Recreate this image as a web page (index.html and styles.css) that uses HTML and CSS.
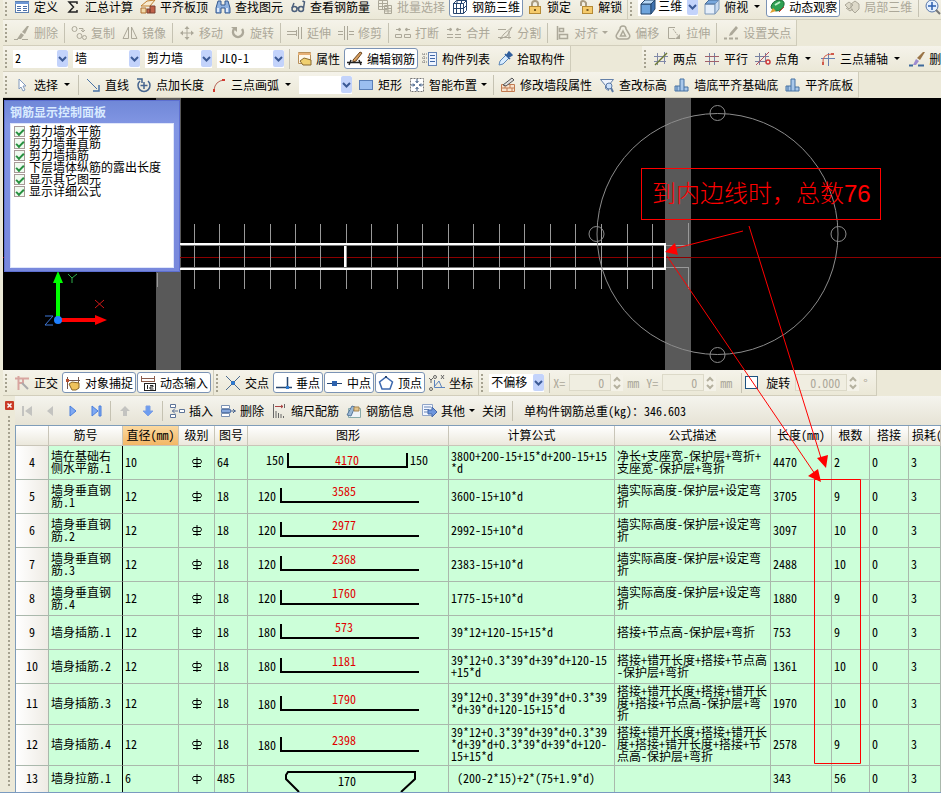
FILE: index.html
```html
<!DOCTYPE html>
<html lang="zh-CN">
<head>
    <meta charset="utf-8">
    <title>编辑钢筋</title>
    <link rel="stylesheet" href="styles.css">
</head>
<body>
<div class="app">
    <div class="toolbars">
        <!-- Main toolbar -->
        <div class="row">
            <div class="toolbar">
                <span class="grip"></span>
                <button class="tool"><svg class="icon" viewBox="0 0 16 16"><rect x="1.500" y="2.500" width="13" height="11" fill="#fff" stroke="#5b7fb0"/><path d="M1 3h14v2H1z" fill="#6d97d4"/><path d="M3 7.500h4M3 9.500h4M3 11.500h4M9 7.500h4M9 9.500h4M9 11.500h4" stroke="#4a6fa8"/></svg>定义</button>
                <button class="tool"><svg class="icon" viewBox="0 0 16 16"><path d="M12 5V3H4l4.500 5L4 13h8v-2" fill="none" stroke="#222" stroke-width="1.500"/></svg>汇总计算</button>
                <button class="tool"><svg class="icon" viewBox="0 0 16 16"><path d="M1 7l6-5 8-1-5 6z" fill="#f7ead0" stroke="#c08030"/><path d="M1 9h5v5H1z" fill="#f0d8a8" stroke="#b07030"/><path d="M7 10h3v4H7zM10 7h5v7h-5z" fill="#c0624a" stroke="#7d4030"/></svg>平齐板顶</button>
                <button class="tool"><svg class="icon" viewBox="0 0 16 16"><path d="M3 2h3v4h4V2h3l2 7v5h-5V9H6v5H1V9z" fill="#8fb2e0" stroke="#34598f"/><path d="M3 9v4M12 9v4" stroke="#dce9fa" stroke-width="2"/></svg>查找图元</button>
                <button class="tool"><svg class="icon" viewBox="0 0 16 16"><g fill="none" stroke="#4c607c" stroke-width="1.500"><circle cx="4.500" cy="10" r="2.500"/><circle cx="11" cy="10" r="2.500"/><path d="M2 9l2-5M13.500 9l1-6-2-1M7 9.500q1-1 2 0"/></g></svg>查看钢筋量</button>
                <button class="tool" disabled><svg class="icon" viewBox="0 0 16 16"><path d="M1.500 1.500h9v9h-9zM1 4.500h10M1 7.500h10M5.500 1v10M7.500 6.500h7v8h-7zM7 9.500h8M7 12h8M11 7v8" fill="none" stroke="currentColor"/></svg>批量选择</button>
                <button class="tool pressed"><svg class="icon" viewBox="0 0 16 16"><path d="M1.500 4.500l3-3h10v10l-3 3h-10zM1 4.500h10.500v10M11.500 4.500l3-3M1 9.500h10.500l3-3M4.500 4v11M8.500 4v11M5 1.500v3M9.500 1.500v3" fill="none" stroke="#27456e"/></svg>钢筋三维</button>
                <button class="tool"><svg class="icon" viewBox="0 0 16 16"><path d="M5 8V5q0-3 3-3t3 3v3" fill="none" stroke="#a99b80" stroke-width="2"/><rect x="2.500" y="7.500" width="11" height="7" fill="#f5cb6c" stroke="#b58a35"/><path d="M8 10v2" stroke="#7a5a20" stroke-width="2"/></svg>锁定</button>
                <button class="tool"><svg class="icon" viewBox="0 0 16 16"><path d="M3 7V4q0-2 2-2t3 2v4" fill="none" stroke="#a99b80" stroke-width="2"/><rect x="4.500" y="7.500" width="10" height="7" fill="#f5cb6c" stroke="#b58a35"/><path d="M9.500 10v2" stroke="#7a5a20" stroke-width="2"/></svg>解锁</button>
            </div>
            <div class="toolbar open">
                <span class="grip"></span>
                <div class="combo view-combo">
                    <svg class="icon" viewBox="0 0 16 16"><path d="M1 5h10v10H1z" fill="#6fa5dc" stroke="#26486f"/><path d="M1 5l4-4h10l-4 4z" fill="#b7d8f5" stroke="#26486f"/><path d="M11 5l4-4v9l-4 5z" fill="#3e72b0" stroke="#26486f"/></svg>
                    <select aria-label="视图"><option>三维</option></select>
                    <svg class="arrow" viewBox="0 0 11 17"><path d="M2 7l3.500 3.500L9 7" fill="none" stroke="#3c5a96" stroke-width="2"/></svg>
                </div>
                <button class="tool"><svg class="icon" viewBox="0 0 16 16"><path d="M1 5h10v10H1z" fill="#e4eefa" stroke="#7c98ba"/><path d="M1 5l4-4h10l-4 4z" fill="#79a8dd" stroke="#4a6c96"/><path d="M11 5l4-4v9l-4 5z" fill="#c8daf0" stroke="#7c98ba"/></svg>俯视<span class="caret split"></span></button>
                <button class="tool pressed"><svg class="icon" viewBox="0 0 16 16"><path d="M2 8q1-6 8-7 6 0 5 5-2 6-8 6-4 0-5-4z" fill="#2fa052" stroke="#1b6b35"/><path d="M6 6l5-3" stroke="#bff0c8" stroke-width="2"/><path d="M4 9l-3 5 6-2z" fill="#e0a030"/><path d="M10 13l5-5" stroke="#c04030"/></svg>动态观察</button>
                <button class="tool" disabled><svg class="icon" viewBox="0 0 16 16"><path d="M1 6l4-3 4 3-4 4zM7 5l4-3 4 3v5l-4 4-4-4zM2 9l4 3 3-2" fill="#ddd9c9" stroke="currentColor"/></svg>局部三维</button>
                <span class="sep"></span>
                <button class="tool" aria-label="缩放"><svg class="icon" viewBox="0 0 16 16"><circle cx="7" cy="7" r="6" fill="#e4f0ff" stroke="#5876a8"/><path d="M7 3v8M3 7h8" stroke="#2d5fb0" stroke-width="1.500"/><path d="M11 11l4 4" stroke="#777" stroke-width="2"/></svg></button>
            </div>
        </div>

        <!-- Modify toolbar -->
        <div class="row">
            <div class="toolbar">
                <span class="grip"></span>
                <button class="tool" disabled><svg class="icon" viewBox="0 0 16 16"><path d="M15 1l-4 8-3-2 5-6zM7 8l3 2-3 4H3z" fill="currentColor"/><path d="M0 14.500h4M8 14.500h6" stroke="currentColor"/></svg>删除</button>
                <span class="sep"></span>
                <button class="tool" disabled><svg class="icon" viewBox="0 0 16 16"><g fill="none" stroke="currentColor"><circle cx="3.500" cy="4" r="2.500"/><circle cx="8.500" cy="11" r="2.500"/><circle cx="13.500" cy="12.500" r="2"/><path d="M8 3.500h4v3M10 5l2 2 2-2" /></g></svg>复制</button>
                <button class="tool" disabled><svg class="icon" viewBox="0 0 16 16"><path d="M6.500 2v11.500H1zM9.500 2v11.500H15z" fill="none" stroke="currentColor"/></svg>镜像</button>
                <span class="sep"></span>
                <button class="tool" disabled><svg class="icon" viewBox="0 0 16 16"><path d="M8 3v10M3 8h10" stroke="currentColor"/><path d="M8 1l2.500 3h-5zM8 15l2.500-3h-5zM1 8l3-2.500v5zM15 8l-3-2.500v5z" fill="currentColor"/></svg>移动</button>
                <button class="tool" disabled><svg class="icon" viewBox="0 0 16 16"><path d="M4 4a5 5 0 1 0 8 0" fill="none" stroke="currentColor" stroke-width="2.500"/><path d="M1 2h6v5z" fill="currentColor"/></svg>旋转</button>
                <span class="sep"></span>
                <button class="tool" disabled><svg class="icon" viewBox="0 0 16 16"><path d="M0 6.500h9M0 9.500h9M11.500 2v12M14.500 2v12M9.500 5v6" stroke="currentColor"/></svg>延伸</button>
                <button class="tool" disabled><svg class="icon" viewBox="0 0 16 16"><path d="M0 6.500h5M0 9.500h5M11 6.500h5M11 9.500h5M6.500 1v14M9.500 1v14" stroke="currentColor"/></svg>修剪</button>
                <span class="sep"></span>
                <button class="tool" disabled><svg class="icon" viewBox="0 0 16 16"><path d="M1 4.500h4M11 4.500h4M4 3v3l2-1.500zM12 3v3l-2-1.500z" stroke="currentColor" fill="currentColor"/><path d="M.5 9.500h6v3h-6zM9.500 9.500h6v3h-6z" fill="none" stroke="currentColor"/></svg>打断</button>
                <button class="tool" disabled><svg class="icon" viewBox="0 0 16 16"><path d="M1 4.500h4M11 4.500h4M4 3v3l2-1.500zM12 3v3l-2-1.500z" stroke="currentColor" fill="currentColor"/><path d="M1 9.500h6M9 9.500h6M1 12.500h6M9 12.500h6" stroke="currentColor"/></svg>合并</button>
                <button class="tool" disabled><svg class="icon" viewBox="0 0 16 16"><path d="M1 4.500h8M1 12.500h13M3 14l4-5 8-7-5 9zM12 6v8" fill="none" stroke="currentColor"/></svg>分割</button>
                <span class="sep"></span>
                <button class="tool" disabled><svg class="icon" viewBox="0 0 16 16"><path d="M3.500 1v14M5.500 3.500h4v3h-4zM5.500 9.500h8v4h-8z" fill="none" stroke="currentColor" stroke-width="1.500"/></svg>对齐<span class="caret"></span></button>
                <button class="tool" disabled><svg class="icon" viewBox="0 0 16 16"><g fill="none" stroke="currentColor" stroke-width="1.500"><path d="M5 4a3 3 0 0 1 6 0l3 5a3 3 0 0 1-2 5H4a3 3 0 0 1-2-5z"/><path d="M8 6l2.500 5h-5z"/></g></svg>偏移</button>
                <button class="tool" disabled><svg class="icon" viewBox="0 0 16 16"><path d="M9 2.500H2.500v11H9" fill="none" stroke="currentColor"/><path d="M7 4l6 8" stroke="currentColor" stroke-dasharray="2 1"/><path d="M14 9v5H9z" fill="currentColor"/></svg>拉伸</button>
                <span class="sep"></span>
                <button class="tool" disabled><svg class="icon" viewBox="0 0 16 16"><path d="M6 11l1-3 6-7 2 2-6 7z" fill="currentColor"/><path d="M1 13.500h3M6 13.500h4M12 13.500h3" stroke="currentColor" stroke-width="2"/></svg>设置夹点</button>
            </div>
        </div>

        <!-- Member selection toolbar -->
        <div class="row">
            <div class="toolbar">
                <span class="grip"></span>
                <div class="combo short"><select aria-label="楼层"><option>2</option></select><svg class="arrow" viewBox="0 0 11 17"><path d="M2 7l3.500 3.500L9 7" fill="none" stroke="#3c5a96" stroke-width="2"/></svg></div>
                <div class="combo"><select aria-label="构件类型"><option>墙</option></select><svg class="arrow" viewBox="0 0 11 17"><path d="M2 7l3.500 3.500L9 7" fill="none" stroke="#3c5a96" stroke-width="2"/></svg></div>
                <div class="combo"><select aria-label="构件类别"><option>剪力墙</option></select><svg class="arrow" viewBox="0 0 11 17"><path d="M2 7l3.500 3.500L9 7" fill="none" stroke="#3c5a96" stroke-width="2"/></svg></div>
                <div class="combo"><select aria-label="构件名称"><option>JLQ-1</option></select><svg class="arrow" viewBox="0 0 11 17"><path d="M2 7l3.500 3.500L9 7" fill="none" stroke="#3c5a96" stroke-width="2"/></svg></div>
                <span class="sep"></span>
                <button class="tool"><svg class="icon" viewBox="0 0 16 16"><path d="M2.500 1.500h12v11h-12z" fill="#fff8ea" stroke="#b9905a"/><path d="M2 2h13v2H2z" fill="#e6b077"/><path d="M4 10l4-3 7 2v5H7z" fill="#f0d070" stroke="#8a6b30"/></svg>属性</button>
                <button class="tool pressed"><svg class="icon" viewBox="0 0 16 16"><path d="M6 9l7-8 2 1-6 8-3 1z" fill="#d8a060" stroke="#6d4822"/><path d="M0 11.500h15M2 14l2-5M12 9l2 5" stroke="#222" stroke-width="1.500"/></svg>编辑钢筋</button>
                <button class="tool"><svg class="icon" viewBox="0 0 16 16"><path d="M0 3h5M0 7h5M0 11h5M2 3v10" stroke="#777" stroke-dasharray="1 1"/><rect x="6.500" y="1.500" width="8" height="13" fill="#eef4ff" stroke="#6685b5"/><path d="M8 4.500h5M8 7.500h5M8 10.500h5" stroke="#3f67a5"/></svg>构件列表</button>
                <button class="tool"><svg class="icon" viewBox="0 0 16 16"><path d="M2 14l1-4 6-6 3 3-6 6z" fill="#d8ecff" stroke="#5b87b8"/><path d="M8 3l5 5M10 4l2-3 3 3-3 2z" fill="#315f9d" stroke="#315f9d" stroke-width="1.500"/></svg>拾取构件</button>
            </div>
            <div class="toolbar open axis-bar">
                <span class="grip"></span>
                <button class="tool"><svg class="icon" viewBox="0 0 16 16"><path d="M4.500 2v12M11.500 1v12M1 5.500h14M1 10.500h12" stroke="#8088a8"/><path d="M2 14L14 2" stroke="#6d7a35" stroke-width="1.500"/></svg>两点</button>
                <button class="tool"><svg class="icon" viewBox="0 0 16 16"><path d="M5.500 2v12M10.500 2v12" stroke="#7484a8"/><path d="M1 5.500h14M1 10.500h14" stroke="#a1606a"/></svg>平行</button>
                <button class="tool"><svg class="icon" viewBox="0 0 16 16"><path d="M4.500 2v12M10.500 2v9M0 5.500h14M0 10.500h10" stroke="#7880a0"/><path d="M1 14L14 1" stroke="#b65060"/><circle cx="13" cy="11" r="2" fill="none" stroke="#cf3b3b" stroke-width="1.500"/></svg>点角<span class="caret split"></span></button>
                <button class="tool"><svg class="icon" viewBox="0 0 16 16"><path d="M1 7.500h14M8.500 2v13" stroke="#6780b0"/><path d="M3 12Q2 3 12 3" fill="none" stroke="#d05a4a"/><path d="M2 11h2v3H2zM11 2h3v2h-3z" fill="#d05a4a"/></svg>三点辅轴<span class="caret split"></span></button>
                <button class="tool"><svg class="icon" viewBox="0 0 16 16"><path d="M16 1l-5 8-3-2 6-6z" fill="#9a7548"/><path d="M7 8l3 2-3 4H4z" fill="#9d8cd0"/><path d="M0 14.500h4M9 14.500h6" stroke="#3e6a9c" stroke-width="2"/></svg>删除</button>
            </div>
        </div>

        <!-- Draw toolbar -->
        <div class="row">
            <div class="toolbar">
                <span class="grip"></span>
                <button class="tool"><svg class="icon" viewBox="0 0 16 16"><path d="M5 2v10l2-2 2 4 2-1-2-4h3z" fill="#fff" stroke="#8099bd"/></svg>选择<span class="caret split"></span></button>
                <span class="sep"></span>
                <button class="tool"><svg class="icon" viewBox="0 0 16 16"><path d="M2 2l10 10" stroke="#4872a5"/><path d="M14 8v6H8" fill="none" stroke="#4872a5" stroke-width="1.500"/></svg>直线</button>
                <button class="tool"><svg class="icon" viewBox="0 0 16 16"><path d="M4 4a6 6 0 1 0 8 0" fill="none" stroke="#46658f" stroke-width="1.500"/><path d="M1 2h5v4M8 5v7M4.500 8.500h7" fill="none" stroke="#46658f" stroke-width="1.500"/></svg>点加长度</button>
                <button class="tool"><svg class="icon" viewBox="0 0 16 16"><path d="M3 13Q4 4 13 3" fill="none" stroke="#b8695c"/><path d="M2 12h2v3H2zM11 2h3v2h-3z" fill="#d23a30"/></svg>三点画弧<span class="caret split"></span></button>
                <div class="combo arc"><select aria-label="画弧参数"><option></option></select><svg class="arrow" viewBox="0 0 11 17"><path d="M2 7l3.500 3.500L9 7" fill="none" stroke="#3c5a96" stroke-width="2"/></svg></div>
                <button class="tool"><svg class="icon" viewBox="0 0 16 16"><rect x="1.500" y="3.500" width="13" height="9" fill="#9bbef0" stroke="#5a7fb8"/></svg>矩形</button>
                <button class="tool"><svg class="icon" viewBox="0 0 16 16"><rect x="1.500" y="1.500" width="13" height="13" fill="#fff" stroke="#777" stroke-dasharray="2 1"/><path d="M8 2v4M8 10v4M2 8h4M10 8h4" stroke="#35557f"/><path d="M6.500 4L8 5.500 9.500 4M6.500 12L8 10.500 9.500 12M4 6.500L5.500 8 4 9.500M12 6.500L10.500 8 12 9.500" fill="none" stroke="#35557f"/></svg>智能布置<span class="caret"></span></button>
                <span class="sep"></span>
                <button class="tool"><svg class="icon" viewBox="0 0 16 16"><path d="M1.500 7.500h13v7h-13zM1 11h14M5 8v3M10 8v3M7 11v3M12 11v3" fill="#f8e2cc" stroke="#c27a50"/><path d="M3 8l9-7 2 2-8 6z" fill="#ddd" stroke="#555"/></svg>修改墙段属性</button>
                <button class="tool"><svg class="icon" viewBox="0 0 16 16"><path d="M1.500 2.500h13l-5 6v5l-3-2v-3z" fill="#eef3fc" stroke="#6480a8"/><circle cx="10" cy="9" r="3" fill="#cfe2fa" stroke="#5a78a4"/><path d="M12 11l2 4" stroke="#5a78a4" stroke-width="2"/></svg>查改标高</button>
                <button class="tool"><svg class="icon" viewBox="0 0 16 16"><path d="M6 2h4v8h4v4H1V9h5z" fill="#a9c8ea" stroke="#4672a3"/><path d="M6 9v5M10 10v4M3 9v5" stroke="#4672a3"/></svg>墙底平齐基础底</button>
                <button class="tool"><svg class="icon" viewBox="0 0 16 16"><path d="M6 2h4v8h4v4H1V9h5z" fill="#a9c8ea" stroke="#4672a3"/><path d="M6 9v5M10 10v4M3 9v5" stroke="#4672a3"/></svg>平齐底板</button>
            </div>
        </div>
    </div>

    <!-- Model view -->
    <div class="viewport">
        <svg class="model" width="100%" height="272">
            <g transform="translate(-3 -98)" shape-rendering="crispEdges">
                <path d="M156 98h25v272h-25zM665 98h26v272h-26z" fill="#595959"/>
                <path d="M3 257.500h2000" stroke="#8c0000"/>
                <path d="M194.500 224v65M219.500 224v65M244.500 224v65M270.500 224v65M295.500 224v65M320.500 224v65M346.500 224v65M371.500 224v65M397.500 224v65M422.500 224v65M448.500 224v65M473.500 224v65M499.500 224v65M524.500 224v65M550.500 224v65M575.500 224v65M601.500 224v65M627.500 224v65M652.500 224v65M157.500 273v14M688.500 223v22.500H666M688.500 289v-21.500H666" fill="none" stroke="#999"/>
                <path d="M179 244h487M179 269h487M665 243v27M345 243v27" stroke="#fff" stroke-width="2" fill="none"/>
                <path d="M179 245.500h485M179 267.500h485" stroke="#777"/>
            </g>
            <g transform="translate(-3 -98)" fill="none">
                <g stroke="#8c8c8c">
                    <circle cx="717.500" cy="234" r="120.500"/>
                    <circle cx="717.500" cy="113" r="7.500"/>
                    <circle cx="838.500" cy="234" r="7.500"/>
                    <circle cx="717.500" cy="355" r="7.500"/>
                    <circle cx="596.500" cy="234" r="7.500"/>
                </g>
                <path d="M58 320v-40" stroke="#0f0" stroke-width="4"/>
                <path d="M58 271l5 12H53z" fill="#0f0"/>
                <path d="M58 320h40" stroke="#f00" stroke-width="4"/>
                <path d="M107 320l-12-5v10z" fill="#f00"/>
                <circle cx="58" cy="320" r="4" fill="#1e80ff"/>
                <path d="M68 274l4 4 5-4M72 278v5" stroke="#2fae4a"/>
                <path d="M95 300l9 8M104 300l-9 8" stroke="#d01818"/>
                <path d="M45 316h8l-8 9h8" stroke="#3f78d8"/>
            </g>
        </svg>
        <!-- Display options palette -->
        <div class="palette">
            <div class="palette-title">钢筋显示控制面板</div>
            <div class="palette-body">
                <label><input type="checkbox" checked>剪力墙水平筋</label>
                <label><input type="checkbox" checked>剪力墙垂直筋</label>
                <label><input type="checkbox" checked>剪力墙插筋</label>
                <label><input type="checkbox" checked>下层墙体纵筋的露出长度</label>
                <label><input type="checkbox" checked>显示其它图元</label>
                <label><input type="checkbox" checked>显示详细公式</label>
            </div>
        </div>
    </div>

    <!-- Snap toolbar -->
    <div class="row">
        <div class="toolbar">
            <span class="grip"></span>
            <button class="tool"><svg class="icon" viewBox="0 0 16 16"><path d="M1 3.500h14M4.500 1v14M4 8h5V3" fill="none" stroke="#d8a5a0" stroke-width="2"/><path d="M8 8l6 6" stroke="#aaa" stroke-width="2"/></svg>正交</button>
            <button class="tool pressed"><svg class="icon" viewBox="0 0 16 16"><path d="M2.500 2v12M13.500 2v9M1 5.500h14" stroke="#71544b"/><path d="M4 9l3-2 7 1v5l-3 2H7z" fill="#efc25c" stroke="#8a6422"/><path d="M1 4h3v3H1z" fill="#b85030"/></svg>对象捕捉</button>
            <button class="tool pressed"><svg class="icon" viewBox="0 0 16 16"><path d="M1 3.500h14M1.500 1v5M14.500 1v5M1 6.500h14" stroke="#8a5a4a"/><rect x="4.500" y="8.500" width="11" height="7" fill="#fff" stroke="#222"/><path d="M7.500 10v4M10 10.500h3v1.500h-3v2h3.500" fill="none" stroke="#222"/></svg>动态输入</button>
        </div>
        <div class="toolbar">
            <span class="grip"></span>
            <button class="tool"><svg class="icon" viewBox="0 0 16 16"><path d="M1 1l14 14M15 1L1 15" stroke="#49698f"/><path d="M8 6l2 2-2 2-2-2z" fill="#2d7ad0" stroke="#2d7ad0"/></svg>交点</button>
            <button class="tool pressed"><svg class="icon" viewBox="0 0 16 16"><path d="M0 12.500h16M11.500 2v11" stroke="#27456e" stroke-width="1.500"/><path d="M10 11h3v3h-3z" fill="#2d7ad0"/></svg>垂点</button>
            <button class="tool pressed"><svg class="icon" viewBox="0 0 16 16"><path d="M0 8.500h15" stroke="#27456e"/><path d="M5 6h5v5H5z" fill="#2d62ae"/></svg>中点</button>
            <button class="tool pressed"><svg class="icon" viewBox="0 0 16 16"><path d="M8 2l6.500 5-2.500 7H4L1.500 7z" fill="none" stroke="#3c68ae" stroke-width="1.500"/><path d="M7 1h2v2H7z" fill="#27456e"/></svg>顶点</button>
            <button class="tool"><svg class="icon" viewBox="0 0 16 16"><path d="M5.500 5v7.500H16M5 12l5-6 3 7" fill="none" stroke="#5b83bd"/><path d="M0 3l2 2 2-2M2 5v3M12 0l3 4M15 0l-3 4" stroke="#666" fill="none"/><circle cx="2" cy="14" r="1.500" fill="none" stroke="#666"/><circle cx="6" cy="2" r="1.500" fill="none" stroke="#666"/></svg>坐标</button>
        </div>
        <div class="toolbar">
            <span class="grip"></span>
            <div class="combo short"><select aria-label="偏移方式"><option>不偏移</option></select><svg class="arrow" viewBox="0 0 11 17"><path d="M2 7l3.500 3.500L9 7" fill="none" stroke="#3c5a96" stroke-width="2"/></svg></div>
            <span class="sep"></span>
            <div class="field"><label for="offsetX">X=</label><input type="text" id="offsetX" value="0" disabled><svg class="spin" viewBox="0 0 12 16"><path d="M0 0h12v16H0z" fill="#f4f2e8"/><path d="M3 6l3-3 3 3M3 10l3 3 3-3" fill="none" stroke="#b5b19f" stroke-width="2"/></svg><span>mm</span></div>
            <div class="field"><label for="offsetY">Y=</label><input type="text" id="offsetY" value="0" disabled><svg class="spin" viewBox="0 0 12 16"><path d="M0 0h12v16H0z" fill="#f4f2e8"/><path d="M3 6l3-3 3 3M3 10l3 3 3-3" fill="none" stroke="#b5b19f" stroke-width="2"/></svg><span>mm</span></div>
            <span class="sep"></span>
            <label class="rotate"><input type="checkbox" id="rotate">旋转</label>
            <div class="field wide"><input type="text" aria-label="旋转角度" value="0.000" disabled><svg class="spin" viewBox="0 0 12 16"><path d="M0 0h12v16H0z" fill="#f4f2e8"/><path d="M3 6l3-3 3 3M3 10l3 3 3-3" fill="none" stroke="#b5b19f" stroke-width="2"/></svg><span>°</span></div>
        </div>
    </div>

    <!-- Rebar edit panel -->
    <div class="panel">
        <div class="panel-side">
            <button class="close" aria-label="关闭面板"><svg viewBox="0 0 9 9"><rect width="9" height="9" rx="1" fill="#c93a26"/><path d="M2.500 2.500l4 4M6.500 2.500l-4 4" stroke="#fff" stroke-width="1.500"/></svg></button>
            <span class="side-grip"></span>
        </div>
        <div class="panel-main">
            <div class="panel-bar">
                <button class="tool" disabled aria-label="首行"><svg class="icon" viewBox="0 0 16 16"><path d="M3 3h2v10H3zM13 3v10L6 8z" fill="#c3c3c0"/></svg></button>
                <button class="tool" disabled aria-label="上一行"><svg class="icon" viewBox="0 0 16 16"><path d="M11 3v10L5 8z" fill="#c3c3c0"/></svg></button>
                <button class="tool" aria-label="下一行"><svg class="icon" viewBox="0 0 16 16"><path d="M5 3v10l6-5z" fill="#7fa9f2" stroke="#4b7fdc"/></svg></button>
                <button class="tool" aria-label="末行"><svg class="icon" viewBox="0 0 16 16"><path d="M4 3v10l6-5zM11 3h2v10h-2z" fill="#7fa9f2" stroke="#4b7fdc"/></svg></button>
                <span class="sep"></span>
                <button class="tool" disabled aria-label="上移"><svg class="icon" viewBox="0 0 16 16"><path d="M8 3l5 5h-3v5H6V8H3z" fill="#c3c3c0"/></svg></button>
                <button class="tool" aria-label="下移"><svg class="icon" viewBox="0 0 16 16"><path d="M8 13l5-5h-3V3H6v5H3z" fill="#6d9df0" stroke="#7fa0e4"/></svg></button>
                <span class="sep"></span>
                <button class="tool"><svg class="icon" viewBox="0 0 16 16"><path d="M1.500 1.500h5v3h-5zM1.500 11.500h5v3h-5zM10.500 6.500h5v3h-5z" fill="#fff" stroke="#5c7398"/><path d="M3 8h6M6 5.500L3.500 8 6 10.500" fill="none" stroke="#5c7398"/></svg>插入</button>
                <button class="tool"><svg class="icon" viewBox="0 0 16 16"><path d="M1.500 2.500h8v3h-8zM1.500 10.500h8v3h-8z" fill="#fff" stroke="#7b91b2"/><path d="M1.500 6.500h9v3h-9z" fill="#87a8dc" stroke="#5878ac"/><path d="M11 8h5M13 6l2 2-2 2" fill="none" stroke="#44608c"/></svg>删除</button>
                <button class="tool"><svg class="icon" viewBox="0 0 16 16"><path d="M2.500 1v14M13.500 1v4M5 8v7M7.500 10v5M10 11v4M12.500 13v2" stroke="#666"/><path d="M4 3.500h8M10 2l2 1.500L10 5" fill="none" stroke="#a44"/></svg>缩尺配筋</button>
                <button class="tool"><svg class="icon" viewBox="0 0 16 16"><path d="M2.500 5.500h12v9h-12z" fill="#eef3f8" stroke="#8aa"/><path d="M1 12l5-9 3 1-4 9z" fill="#9bb8d4" stroke="#58789c"/><path d="M8 4h5v4H8z" fill="#e4c48c" stroke="#a58550"/></svg>钢筋信息</button>
                <button class="tool"><svg class="icon" viewBox="0 0 16 16"><path d="M1.500 1.500h10v11h-10z" fill="#f2f6ff" stroke="#90a5c8"/><path d="M3 4h7M3 6.500h5M3 9h5" stroke="#6b88b8"/><path d="M7 7h4V4l5 5-5 5v-3H7z" fill="#6d95dc" stroke="#4568a8"/></svg>其他<span class="caret"></span></button>
                <button class="tool">关闭</button>
                <span class="sep"></span>
                <span class="total">单构件钢筋总重(kg)：346.603</span>
            </div>
            <div class="grid">
                <table>
                    <colgroup>
                        <col class="c-no"><col class="c-name"><col class="c-dia"><col class="c-grade"><col class="c-fig"><col class="c-shape"><col class="c-formula"><col class="c-desc"><col class="c-len"><col class="c-count"><col class="c-lap"><col>
                    </colgroup>
                    <thead>
                        <tr>
                            <th></th>
                            <th>筋号</th>
                            <th class="current">直径(mm)</th>
                            <th>级别</th>
                            <th>图号</th>
                            <th>图形</th>
                            <th>计算公式</th>
                            <th>公式描述</th>
                            <th>长度(mm)</th>
                            <th>根数</th>
                            <th>搭接</th>
                            <th class="loss">损耗(%)</th>
                        </tr>
                    </thead>
                    <tbody>
                        <tr>
                            <th>4</th><td>墙在基础右<br>侧水平筋.1</td><td>10</td>
                            <td class="grade"><svg viewBox="0 0 12 12"><path d="M2.500 2.500h7l1 2-1 2h-7l-1-2zM6 0v11M2 9.500h8" fill="none" stroke="#000"/></svg></td><td>64</td>
                            <td class="shape"><svg viewBox="0 0 200 33"><path d="M40 7v14h119V7" class="bar"/><text x="18" y="19">150</text><text x="162" y="19">150</text><text x="99" y="19" class="val">4170</text></svg></td>
                            <td>3800+200-15+15*d+200-15+15<br>*d</td><td>净长+支座宽-保护层+弯折+<br>支座宽-保护层+弯折</td><td>4470</td><td>2</td><td>0</td><td>3</td>
                        </tr>
                        <tr>
                            <th>5</th><td>墙身垂直钢<br>筋.1</td><td>12</td>
                            <td class="grade"><svg viewBox="0 0 12 12"><path d="M2.500 2.500h7l1 2-1 2h-7l-1-2zM6 0v11M2 9.500h8" fill="none" stroke="#000"/></svg></td><td>18</td>
                            <td class="shape"><svg viewBox="0 0 200 33"><path d="M33 8v14h138" class="bar"/><text x="10" y="21">120</text><text x="96" y="16" class="val">3585</text></svg></td>
                            <td>3600-15+10*d</td><td>墙实际高度-保护层+设定弯<br>折</td><td>3705</td><td>9</td><td>0</td><td>3</td>
                        </tr>
                        <tr>
                            <th>6</th><td>墙身垂直钢<br>筋.2</td><td>12</td>
                            <td class="grade"><svg viewBox="0 0 12 12"><path d="M2.500 2.500h7l1 2-1 2h-7l-1-2zM6 0v11M2 9.500h8" fill="none" stroke="#000"/></svg></td><td>18</td>
                            <td class="shape"><svg viewBox="0 0 200 33"><path d="M33 8v14h138" class="bar"/><text x="10" y="21">120</text><text x="96" y="16" class="val">2977</text></svg></td>
                            <td>2992-15+10*d</td><td>墙实际高度-保护层+设定弯<br>折</td><td>3097</td><td>10</td><td>0</td><td>3</td>
                        </tr>
                        <tr>
                            <th>7</th><td>墙身垂直钢<br>筋.3</td><td>12</td>
                            <td class="grade"><svg viewBox="0 0 12 12"><path d="M2.500 2.500h7l1 2-1 2h-7l-1-2zM6 0v11M2 9.500h8" fill="none" stroke="#000"/></svg></td><td>18</td>
                            <td class="shape"><svg viewBox="0 0 200 33"><path d="M33 8v14h138" class="bar"/><text x="10" y="21">120</text><text x="96" y="16" class="val">2368</text></svg></td>
                            <td>2383-15+10*d</td><td>墙实际高度-保护层+设定弯<br>折</td><td>2488</td><td>10</td><td>0</td><td>3</td>
                        </tr>
                        <tr>
                            <th>8</th><td>墙身垂直钢<br>筋.4</td><td>12</td>
                            <td class="grade"><svg viewBox="0 0 12 12"><path d="M2.500 2.500h7l1 2-1 2h-7l-1-2zM6 0v11M2 9.500h8" fill="none" stroke="#000"/></svg></td><td>18</td>
                            <td class="shape"><svg viewBox="0 0 200 33"><path d="M33 8v14h138" class="bar"/><text x="10" y="21">120</text><text x="96" y="16" class="val">1760</text></svg></td>
                            <td>1775-15+10*d</td><td>墙实际高度-保护层+设定弯<br>折</td><td>1880</td><td>9</td><td>0</td><td>3</td>
                        </tr>
                        <tr>
                            <th>9</th><td>墙身插筋.1</td><td>12</td>
                            <td class="grade"><svg viewBox="0 0 12 12"><path d="M2.500 2.500h7l1 2-1 2h-7l-1-2zM6 0v11M2 9.500h8" fill="none" stroke="#000"/></svg></td><td>18</td>
                            <td class="shape"><svg viewBox="0 0 200 33"><path d="M33 8v14h138" class="bar"/><text x="10" y="21">180</text><text x="96" y="16" class="val">573</text></svg></td>
                            <td>39*12+120-15+15*d</td><td>搭接+节点高-保护层+弯折</td><td>753</td><td>9</td><td>0</td><td>3</td>
                        </tr>
                        <tr>
                            <th>10</th><td>墙身插筋.2</td><td>12</td>
                            <td class="grade"><svg viewBox="0 0 12 12"><path d="M2.500 2.500h7l1 2-1 2h-7l-1-2zM6 0v11M2 9.500h8" fill="none" stroke="#000"/></svg></td><td>18</td>
                            <td class="shape"><svg viewBox="0 0 200 33"><path d="M33 8v14h138" class="bar"/><text x="10" y="21">180</text><text x="96" y="16" class="val">1181</text></svg></td>
                            <td>39*12+0.3*39*d+39*d+120-15<br>+15*d</td><td>搭接+错开长度+搭接+节点高<br>-保护层+弯折</td><td>1361</td><td>10</td><td>0</td><td>3</td>
                        </tr>
                        <tr class="tall">
                            <th>11</th><td>墙身插筋.3</td><td>12</td>
                            <td class="grade"><svg viewBox="0 0 12 12"><path d="M2.500 2.500h7l1 2-1 2h-7l-1-2zM6 0v11M2 9.500h8" fill="none" stroke="#000"/></svg></td><td>18</td>
                            <td class="shape"><svg viewBox="0 0 200 33"><path d="M33 8v14h138" class="bar"/><text x="10" y="21">180</text><text x="96" y="16" class="val">1790</text></svg></td>
                            <td>39*12+0.3*39*d+39*d+0.3*39<br>*d+39*d+120-15+15*d</td><td>搭接+错开长度+搭接+错开长<br>度+搭接+节点高-保护层+弯<br>折</td><td>1970</td><td>10</td><td>0</td><td>3</td>
                        </tr>
                        <tr class="tall">
                            <th>12</th><td>墙身插筋.4</td><td>12</td>
                            <td class="grade"><svg viewBox="0 0 12 12"><path d="M2.500 2.500h7l1 2-1 2h-7l-1-2zM6 0v11M2 9.500h8" fill="none" stroke="#000"/></svg></td><td>18</td>
                            <td class="shape"><svg viewBox="0 0 200 33"><path d="M33 8v14h138" class="bar"/><text x="10" y="21">180</text><text x="96" y="16" class="val">2398</text></svg></td>
                            <td>39*12+0.3*39*d+39*d+0.3*39<br>*d+39*d+0.3*39*d+39*d+120-<br>15+15*d</td><td>搭接+错开长度+搭接+错开长<br>度+搭接+错开长度+搭接+节<br>点高-保护层+弯折</td><td>2578</td><td>9</td><td>0</td><td>3</td>
                        </tr>
                        <tr class="last">
                            <th>13</th><td>墙身拉筋.1</td><td>6</td>
                            <td class="grade"><svg viewBox="0 0 12 12"><path d="M2.500 3.500h7l1 2-1 2h-7l-1-2zM6 1v10" fill="none" stroke="#000"/></svg></td><td>485</td>
                            <td class="shape"><svg class="tie" viewBox="0 0 200 25"><path d="M51 25L38 12V8l2-3h127v7l-14 13" class="bar"/><text x="99" y="19" class="len">170</text></svg></td>
                            <td>&nbsp;(200-2*15)+2*(75+1.9*d)</td><td></td><td>343</td><td>56</td><td>0</td><td>3</td>
                        </tr>
                    </tbody>
                </table>
            </div>
        </div>
    </div>

    <!-- Red markup over the view and the table -->
    <div class="note">到内边线时，总数76</div>
    <svg class="markup" width="941" height="793">
        <g fill="none" stroke="#f00">
            <path d="M743 231l-70 18M749 226l72 232M667 256l148 218"/>
            <path d="M814.500 479.500h46v284h-46z"/>
        </g>
        <path d="M665 252l10-9 3 12zM826 468l-9-10 11-3zM821 482l-13-6 10-7z" fill="#f00"/>
    </svg>
</div>
</body>
</html>
```

FILE: styles.css
```css
* {
    box-sizing: border-box;
}

body {
    margin: 0;
    background: #ece9d8;
    color: #000;
    font-family: "Noto Sans CJK SC", sans-serif;
    font-size: 12px;
    line-height: 12px;
    /* half-width latin, so two digits take one character cell */
    font-feature-settings: "hwid";
}

button, input, select {
    font: inherit;
    font-feature-settings: inherit;
    color: inherit;
    margin: 0;
}

.app {
    position: relative;
    display: flex;
    flex-direction: column;
    height: 100vh;
    overflow: hidden;
}

/* Toolbars */
.toolbars {
    margin-top: -6px;
}

.row {
    display: flex;
    height: 26px;
    padding-left: 3px;
    overflow: hidden;
    background: #ece9d8;
}

.toolbar {
    display: flex;
    flex: none;
    align-items: center;
    gap: 1px;
    padding-right: 2px;
    border-right: 1px solid #cfccba;
    border-bottom: 1px solid #d2cebc;
    background: linear-gradient(#f5f3ea, #ebe8d7);
}

.toolbar.open {
    flex: 1 0 auto;
    border-right: none;
}

.axis-bar {
    margin-left: 71px;
}

.grip {
    width: 2px;
    height: 18px;
    margin: 0 3px 0 2px;
    background: repeating-linear-gradient(#a5a18f 0, #a5a18f 2px, transparent 2px, transparent 4px);
}

.tool {
    display: flex;
    flex: none;
    align-items: center;
    gap: 4px;
    height: 21px;
    padding: 0 2px;
    border: 1px solid transparent;
    border-radius: 3px;
    background: none;
    white-space: nowrap;
}

.tool:disabled {
    color: #aca899;
}

.tool.pressed {
    border-color: #7b93b5;
    background: #fff;
}

.icon {
    flex: none;
    width: 16px;
    height: 16px;
}

.caret {
    width: 5px;
    border: solid transparent;
    border-width: 3px 3px 0;
    border-top-color: currentColor;
}

.caret.split {
    margin: 0 2px;
}

.sep {
    flex: none;
    width: 1px;
    height: 20px;
    margin: 0 2px;
    background: #c5c2b2;
}

.combo {
    display: flex;
    align-items: center;
    width: 67px;
    height: 18px;
    margin: 0 2px;
    background: #fff;
}

.combo.short {
    width: 55px;
}

.combo.arc {
    width: 53px;
}

.view-combo {
    width: 60px;
    padding-left: 2px;
}

.combo select {
    flex: 1;
    min-width: 0;
    padding: 0 0 2px 2px;
    border: none;
    background: none;
    appearance: none;
}

.arrow {
    flex: none;
    width: 11px;
    height: 17px;
    border-radius: 2px;
    background: #c3d3fb;
}

.field {
    display: flex;
    align-items: center;
    gap: 4px;
    margin-right: 6px;
    color: #aca899;
}

.field input {
    width: 42px;
    height: 17px;
    padding: 0 6px 0 0;
    border: 1px solid #dcd9c8;
    background: #f0eee1;
    text-align: right;
}

.field.wide input {
    width: 52px;
}

.spin {
    width: 12px;
    height: 16px;
    margin-left: -4px;
}

.rotate {
    display: flex;
    align-items: center;
    gap: 8px;
    margin-right: 4px;
}

.rotate input {
    width: 13px;
    height: 13px;
    border: 1px solid #1d5280;
    background: #fff;
    appearance: none;
}

/* Model view */
.viewport {
    position: relative;
    flex: none;
    margin-left: 3px;
    background: #000;
}

.model {
    display: block;
}

.palette {
    position: absolute;
    top: 2px;
    left: 1px;
    width: 176px;
    height: 172px;
    padding: 0 5px 4px;
    border: 1px solid #5d6fd0;
    background: linear-gradient(#7088d8, #8296e4 24px, #7888dc);
}

.palette-title {
    padding: 5px 0;
    color: #d9ebff;
    font-weight: bold;
}

.palette-body {
    height: 145px;
    padding: 1px 3px;
    border: 1px solid #dfe6fa;
    background: #fff;
}

.palette label {
    display: flex;
    align-items: center;
    gap: 4px;
    height: 12px;
}

.palette input {
    display: grid;
    place-items: center;
    width: 11px;
    height: 11px;
    border: 1px solid #a89a98;
    background: #effaef;
    appearance: none;
}

.palette input:checked::before {
    content: "";
    width: 6px;
    height: 3px;
    border: solid #279040;
    border-width: 0 0 2px 2px;
    transform: rotate(-45deg);
}

/* Rebar edit panel */
.panel {
    display: flex;
    flex: 1;
    min-height: 0;
    border-bottom: 1px solid #7a9ac0;
}

.panel-side {
    display: flex;
    flex-direction: column;
    gap: 6px;
    width: 15px;
    padding: 5px 2px 4px 5px;
}

.close {
    width: 9px;
    height: 9px;
    padding: 0;
    border: none;
    background: none;
}

.close svg {
    display: block;
}

.side-grip {
    flex: 1;
    width: 2px;
    margin-left: 3px;
    background: repeating-linear-gradient(#a5a18f 0, #a5a18f 2px, transparent 2px, transparent 4px);
}

.panel-main {
    display: flex;
    flex: 1;
    flex-direction: column;
    min-width: 0;
}

.panel-bar {
    display: flex;
    flex: none;
    align-items: center;
    gap: 1px;
    height: 29px;
    padding-left: 1px;
    background: linear-gradient(#f5f4ee, #e6e3d5);
}

.total {
    padding-left: 8px;
    white-space: nowrap;
}

.grid {
    flex: 1;
    min-height: 0;
    overflow: hidden;
    border-top: 1px solid #7f9db9;
    border-left: 1px solid #7f9db9;
}

table {
    width: 100%;
    table-layout: fixed;
    border-collapse: separate;
    border-spacing: 0;
}

.c-no { width: 33px; }
.c-name { width: 74px; }
.c-dia { width: 56px; }
.c-grade { width: 36px; }
.c-fig { width: 33px; }
.c-shape { width: 201px; }
.c-formula { width: 166px; }
.c-desc { width: 156px; }
.c-len { width: 61px; }
.c-count { width: 38px; }
.c-lap { width: 39px; }

th, td {
    height: 34px;
    padding: 0 0 2px 2px;
    overflow: hidden;
    border-right: 1px solid #aab8ac;
    border-bottom: 1px solid #aab8ac;
    text-align: left;
    white-space: nowrap;
}

td {
    background: #ccffd9;
}

th {
    padding: 0 0 2px;
    background: linear-gradient(90deg, #fff, #eeebe4);
    font-weight: normal;
    text-align: center;
}

thead th {
    height: 20px;
    border-color: #c9c5b8;
    background: linear-gradient(#fff, #ebe8dc);
}

thead .current {
    background: linear-gradient(#fbd9a0, #f3b765);
}

thead .loss {
    padding-left: 3px;
    text-align: left;
}

td:nth-child(2) {
    border-right: 1px solid #000;
}

.tall th, .tall td {
    height: 41px;
}

.last th, .last td {
    height: 27px;
}

.grade {
    padding: 0;
    text-align: center;
}

.grade svg {
    display: block;
    width: 12px;
    height: 12px;
    margin: 0 auto;
}

.shape {
    padding: 0;
}

.shape svg {
    display: block;
    width: 200px;
    height: 33px;
}

.shape .tie {
    height: 25px;
}

.shape .bar {
    fill: none;
    stroke: #000;
    stroke-width: 2;
}

.shape .val {
    fill: #e00000;
    text-anchor: middle;
}

.shape .len {
    text-anchor: middle;
}

/* Markup */
.note {
    position: absolute;
    top: 168px;
    left: 641px;
    padding: 12px 9px 12px 10px;
    border: 1px solid #f00;
    color: #f00;
    font-family: "Liberation Sans", "Noto Sans CJK SC", sans-serif;
    font-feature-settings: normal;
    font-size: 24px;
    font-weight: 300;
    line-height: 26px;
    white-space: nowrap;
}

.markup {
    position: absolute;
    top: 0;
    left: 0;
    pointer-events: none;
}
```
